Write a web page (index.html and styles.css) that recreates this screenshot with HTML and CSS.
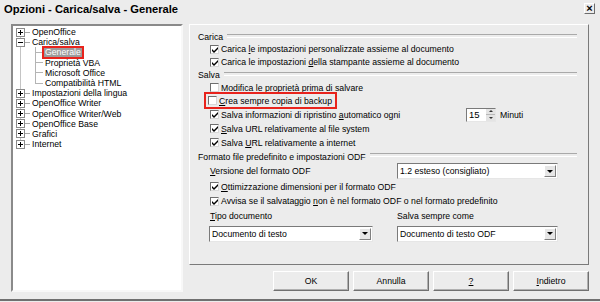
FILE: index.html
```html
<!DOCTYPE html>
<html lang="it">

<head>
    <meta charset="UTF-8">
    <title>Opzioni - Carica/salva - Generale</title>
    <link rel="stylesheet" href="styles.css">
</head>

<body>
    <div class="dialog">
        <div class="titlebar">
            <span class="title">Opzioni - Carica/salva - Generale</span>
            <span class="close">×</span>
        </div>

        <div class="main">
            <div class="tree">
                <div class="item"><span class="exp plus"></span>OpenOffice</div>
                <div class="item"><span class="exp"></span>Carica/salva</div>
                <div class="children">
                    <div class="child"><span class="sel">Generale</span></div>
                    <div class="child">Proprietà VBA</div>
                    <div class="child">Microsoft Office</div>
                    <div class="child">Compatibilità HTML</div>
                </div>
                <div class="item"><span class="exp plus"></span>Impostazioni della lingua</div>
                <div class="item"><span class="exp plus"></span>OpenOffice Writer</div>
                <div class="item"><span class="exp plus"></span>OpenOffice Writer/Web</div>
                <div class="item"><span class="exp plus"></span>OpenOffice Base</div>
                <div class="item"><span class="exp plus"></span>Grafici</div>
                <div class="item"><span class="exp plus"></span>Internet</div>
            </div>

            <div class="side">
                <div class="panel">
                    <div class="group h12">Carica</div>
                    <div class="row h12"><span class="cb on"></span><span>Carica <u>l</u>e impostazioni personalizzate assieme al documento</span></div>
                    <div class="row h14"><span class="cb on"></span><span>Carica le impostazioni <u>d</u>ella stampante assieme al documento</span></div>

                    <div class="group h12">Salva</div>
                    <div class="row"><span class="cb"></span><span><u>M</u>odifica le proprietà prima di salvare</span></div>
                    <div class="row"><span class="mark"><span class="cb"></span><span><u>C</u>rea sempre copia di backup</span></span></div>
                    <div class="row h15">
                        <span class="cb on"></span>
                        <span class="spin-label">Salva informazioni di ripristino <u>a</u>utomatico ogni</span>
                        <span class="spin">15<span class="arrows"><i class="up"></i><i class="down"></i></span></span>
                        <span class="unit">Minuti</span>
                    </div>
                    <div class="row"><span class="cb on"></span><span><u>S</u>alva URL relativamente al file system</span></div>
                    <div class="row h15"><span class="cb on"></span><span>Salva <u>U</u>RL relativamente a internet</span></div>

                    <div class="group h13">Formato file predefinito e impostazioni ODF</div>
                    <div class="row h16">
                        <span class="field-label"><u>V</u>ersione del formato ODF</span>
                        <span class="combo narrow">1.2 esteso (consigliato)<span class="drop"></span></span>
                    </div>
                    <div class="row h15"><span class="cb on"></span><span><u>O</u>ttimizzazione dimensioni per il formato ODF</span></div>
                    <div class="row h14"><span class="cb on"></span><span>Avvisa se il salvataggio <u>n</u>on è nel formato ODF o nel formato predefinito</span></div>
                    <div class="row h16">
                        <span class="field-label"><u>T</u>ipo documento</span>
                        <span>Salva sempre come</span>
                    </div>
                    <div class="row combos">
                        <span class="combo wide">Documento di testo<span class="drop"></span></span>
                        <span class="combo narrow">Documento di testo ODF<span class="drop"></span></span>
                    </div>
                </div>

                <div class="buttons">
                    <button>OK</button>
                    <button>Annulla</button>
                    <button><u>?</u></button>
                    <button><u>I</u>ndietro</button>
                </div>
            </div>
        </div>
    </div>
</body>

</html>
```

FILE: styles.css
```css
* {
    margin: 0;
    padding: 0;
    box-sizing: border-box;
}

body {
    width: 600px;
    height: 302px;
    overflow: hidden;
    background-color: #ececec;
    font-family: "Liberation Sans", Arial, sans-serif;
    font-size: 8.7px;
    color: #000;
}

.dialog {
    height: 301px;
    display: flex;
    flex-direction: column;
    border-bottom: 2px solid #707070;
}

.titlebar {
    height: 24px;
    display: flex;
    justify-content: space-between;
    align-items: flex-start;
    padding: 3px 5px 0 4px;
}

.title {
    font-size: 11.2px;
    font-weight: bold;
    line-height: 13px;
}

.close {
    width: 11px;
    height: 11px;
    border: 1px solid;
    border-color: #fff #6c6c6c #6c6c6c #fff;
    font-size: 11px;
    font-weight: bold;
    line-height: 8px;
    text-align: center;
}

.main {
    flex: 1;
    display: flex;
    gap: 6px;
    padding: 0 11px 7px 11px;
}

/* tree on the left */
.tree {
    width: 172px;
    padding-top: 1px;
    background: #fff linear-gradient(#c4c4c4, #c4c4c4) no-repeat 7px 6px / 1px 112px;
    border: 2px solid;
    border-color: #8a8a8a #f8f8f8 #f8f8f8 #8a8a8a;
}

.item {
    height: 10.2px;
    display: flex;
    align-items: center;
    padding-left: 3px;
    background: linear-gradient(#a8a8a8, #a8a8a8) no-repeat 12px center / 5px 1px;
}

.exp {
    position: relative;
    width: 9px;
    height: 9px;
    margin-right: 7px;
    background-color: #fff;
    border: 1px solid #8a8a8a;
}

.exp::before {
    content: "";
    position: absolute;
    left: 1px;
    top: 3px;
    width: 5px;
    height: 1px;
    background-color: #000;
}

.exp.plus::after {
    content: "";
    position: absolute;
    left: 3px;
    top: 1px;
    width: 1px;
    height: 5px;
    background-color: #000;
}

.children {
    background: linear-gradient(#b4b4b4, #b4b4b4) no-repeat 22px 0 / 1px 36px;
}

.child {
    height: 10.2px;
    display: flex;
    align-items: center;
    padding-left: 32px;
    background: linear-gradient(#b4b4b4, #b4b4b4) no-repeat 22px center / 8px 1px;
}

.sel {
    margin-left: -1px;
    padding: 0 1px;
    line-height: 9px;
    color: #fff;
    background-color: #9c9c9c;
    outline: 2px solid #e8231c;
}

/* options page */
.side {
    flex: 1;
    display: flex;
    flex-direction: column;
}

.panel {
    height: 241px;
    padding: 6px 11px 0 8px;
    border: 1px solid;
    border-color: #fff #7a7a7a #7a7a7a #fff;
}

.group {
    display: flex;
    align-items: center;
    gap: 4px;
}

.group::after {
    content: "";
    flex: 1;
    height: 2px;
    margin-top: -3px;
    border-top: 1px solid #a9a9a9;
    border-bottom: 1px solid #fff;
}

.row {
    height: 13px;
    display: flex;
    align-items: center;
    padding-left: 12px;
    white-space: nowrap;
}

.h12 { height: 12px; }
.h13 { height: 13px; }
.h14 { height: 14px; }
.h15 { height: 15px; }
.h16 { height: 16px; }

.cb {
    flex: none;
    width: 9px;
    height: 9px;
    margin-right: 2px;
    background-color: #fff;
    border: 1px solid;
    border-color: #6e6e6e #d8d8d8 #d8d8d8 #6e6e6e;
}

.cb.on {
    background: #fff url("data:image/svg+xml,%3Csvg xmlns='http://www.w3.org/2000/svg' width='7' height='7'%3E%3Cpath d='M1 3l2 2 4-4v2l-4 4-2-2z' fill='%23000'/%3E%3C/svg%3E") no-repeat 0 0;
}

.mark {
    display: flex;
    align-items: center;
    height: 13px;
    margin-left: -4px;
    padding: 0 3px 0 2px;
    outline: 2px solid #e8231c;
}

.spin-label {
    width: 245px;
}

.spin {
    width: 30px;
    height: 14px;
    display: flex;
    justify-content: space-between;
    align-items: center;
    padding-left: 2px;
    font-size: 9.5px;
    background-color: #fff;
    border: 1px solid;
    border-color: #7a7a7a #e6e6e6 #e6e6e6 #7a7a7a;
}

.arrows {
    width: 10px;
    height: 12px;
    display: flex;
    flex-direction: column;
    background-color: #e4e4e4;
    border-left: 1px solid #fff;
}

.arrows i {
    flex: 1;
    display: flex;
    justify-content: center;
    align-items: center;
}

.arrows i::before {
    content: "";
    border-left: 2px solid transparent;
    border-right: 2px solid transparent;
}

.arrows .up::before {
    border-bottom: 2px solid #333;
}

.arrows .down {
    border-top: 1px solid #b8b8b8;
}

.arrows .down::before {
    border-top: 2px solid #333;
}

.unit {
    margin-left: 4px;
}

.field-label {
    width: 187px;
}

.combo {
    position: relative;
    height: 16px;
    display: flex;
    align-items: center;
    padding-left: 2px;
    background-color: #fff;
    border: 1px solid;
    border-color: #7a7a7a #e6e6e6 #e6e6e6 #7a7a7a;
}

.combo.narrow {
    width: 161px;
}

.combo.wide {
    width: 164px;
}

.drop {
    position: absolute;
    right: 1px;
    top: 1px;
    width: 12px;
    height: 12px;
    display: flex;
    justify-content: center;
    align-items: center;
    background-color: #e6e6e6;
    border: 1px solid;
    border-color: #fff #808080 #808080 #fff;
}

.drop::before {
    content: "";
    border-left: 3px solid transparent;
    border-right: 3px solid transparent;
    border-top: 3px solid #000;
}

.combos {
    height: 17px;
    margin-top: 1px;
    padding-left: 11px;
    gap: 24px;
}

/* buttons at the bottom */
.buttons {
    display: flex;
    justify-content: flex-end;
    gap: 4px;
    margin-top: 6px;
}

.buttons button {
    width: 76px;
    height: 20px;
    font-family: "Liberation Sans", Arial, sans-serif;
    font-size: 8.7px;
    color: #000;
    background-color: #ececec;
    border: 1px solid;
    border-color: #fff #707070 #707070 #fff;
    box-shadow: inset -1px -1px 0 #b0b0b0;
}
```
